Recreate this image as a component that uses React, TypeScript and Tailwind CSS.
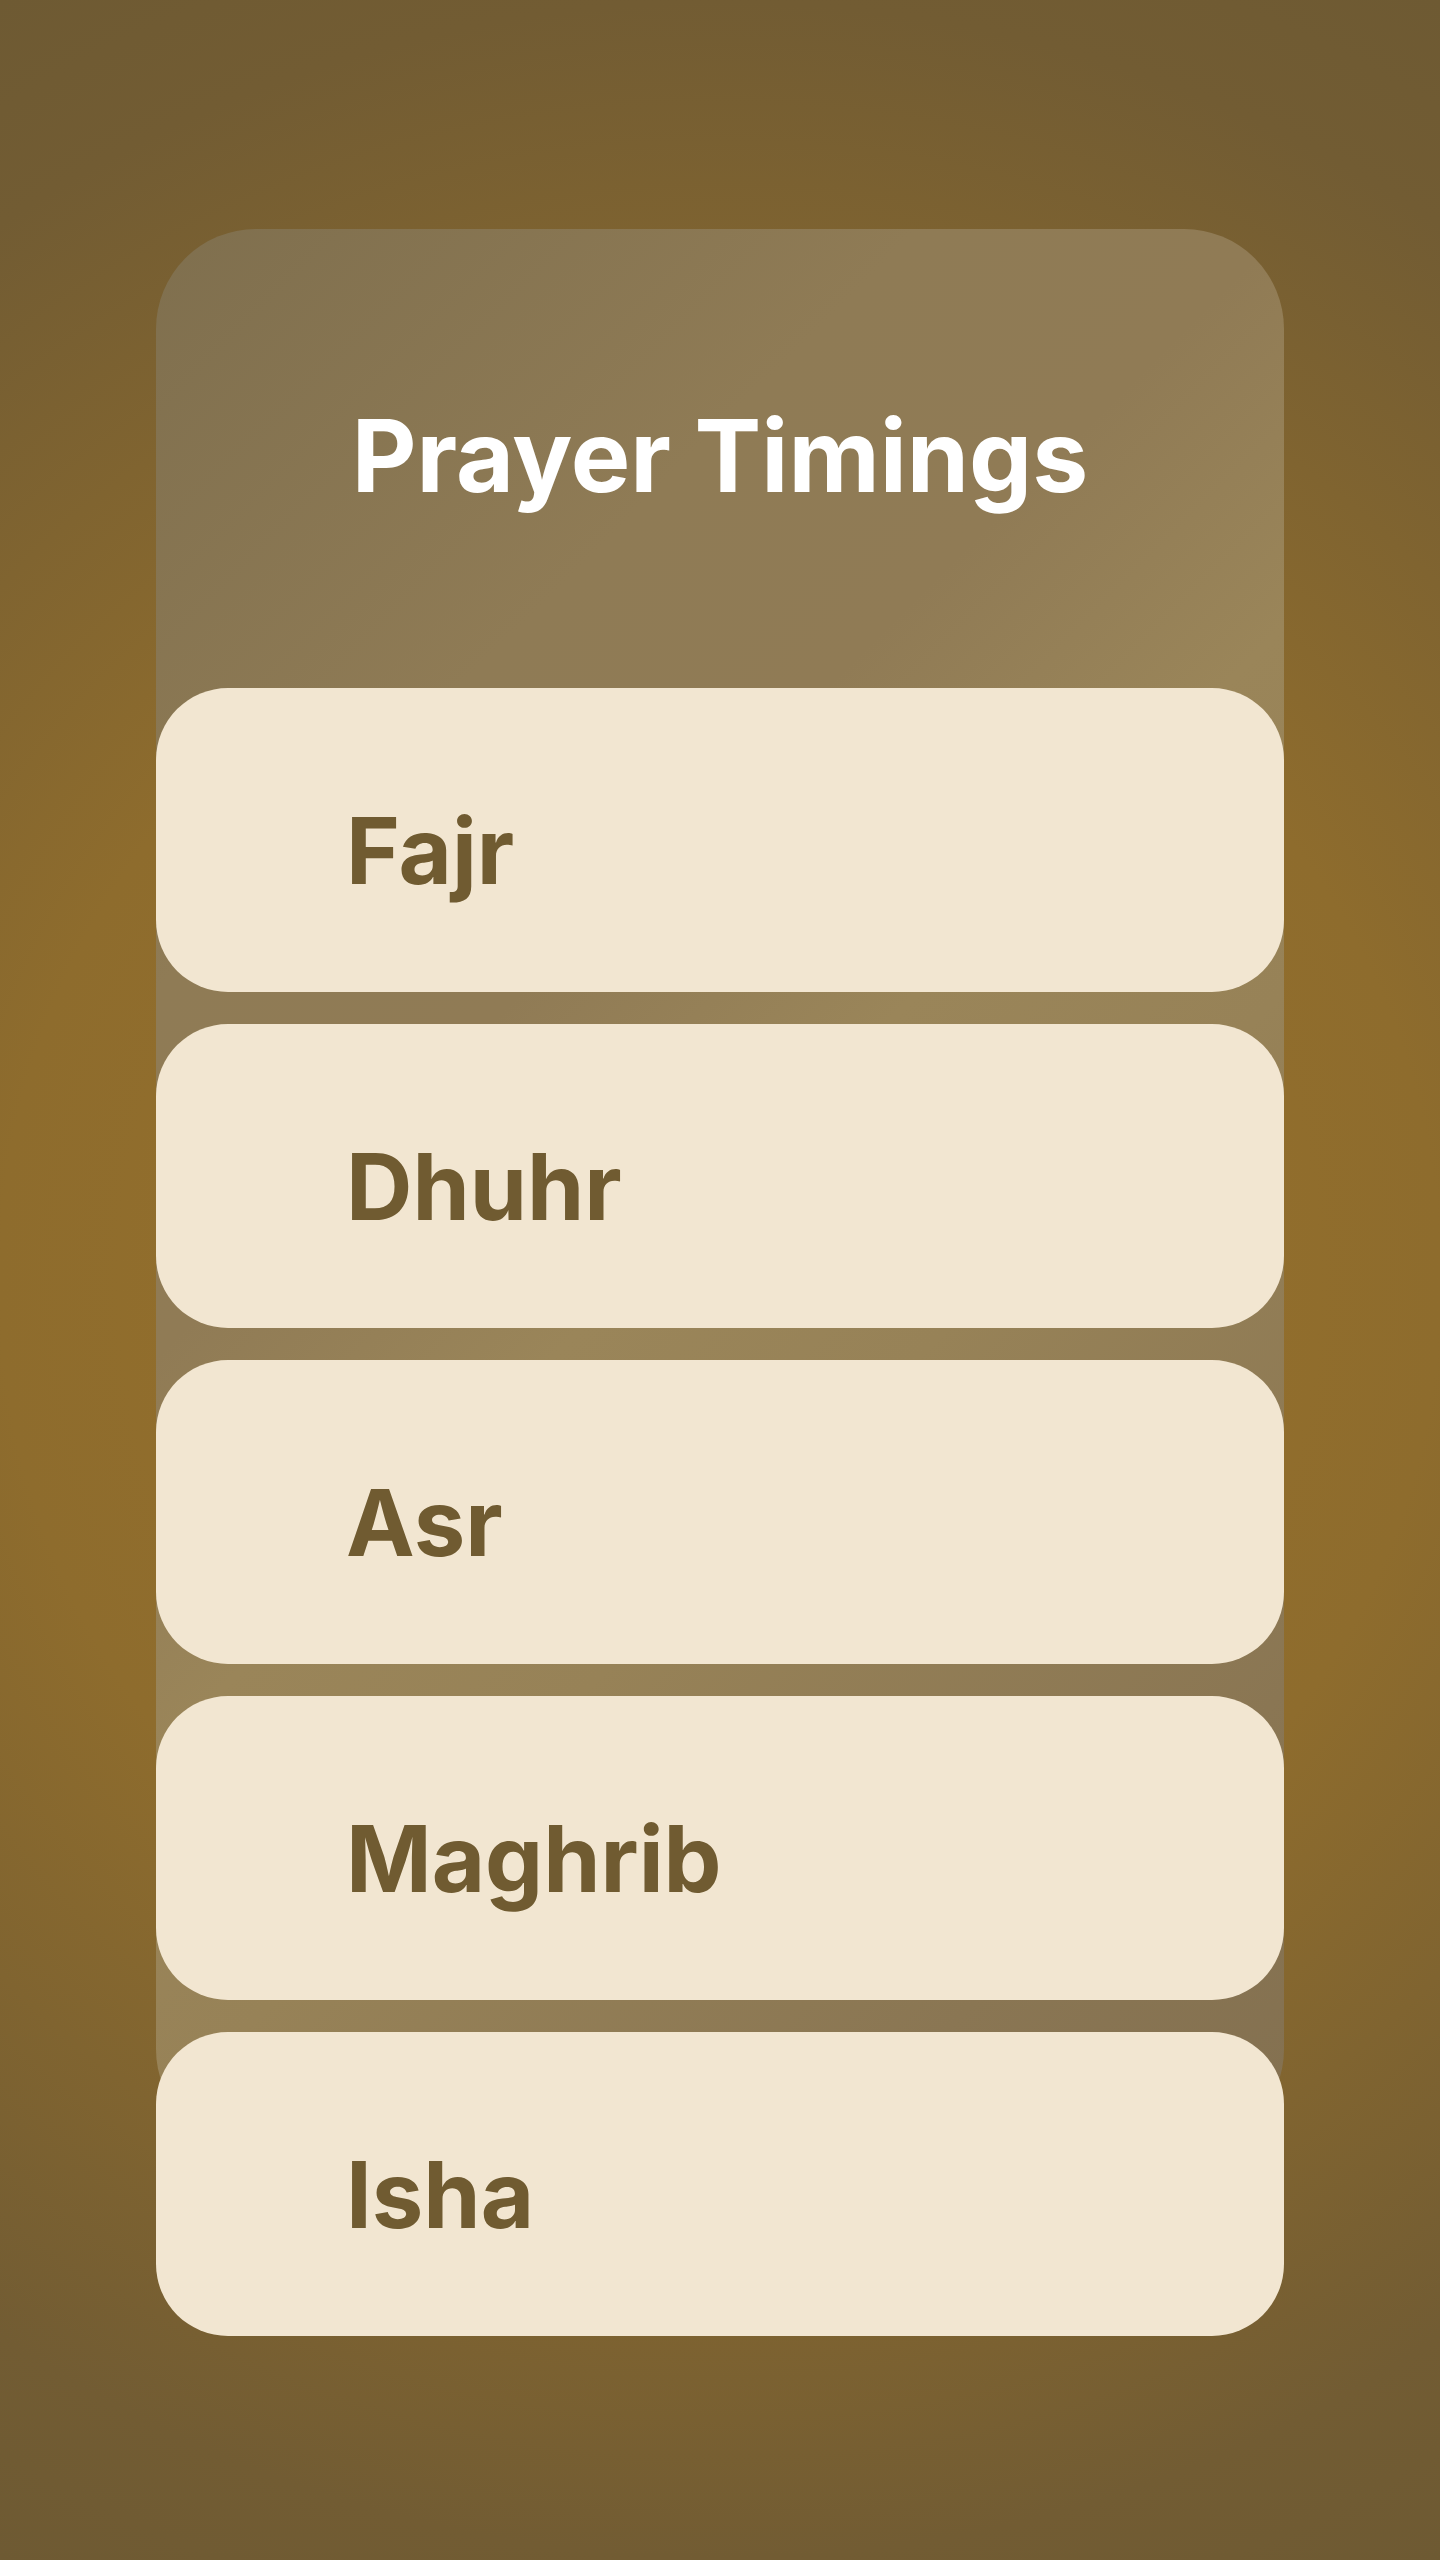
const prayers = ["Fajr", "Dhuhr", "Asr", "Maghrib", "Isha"];

const PrayerCard = ({ name }: { name: string }) => {
    return (
        <div className="h-[304px] w-full rounded-[72px] bg-[#f2e6d1] pl-[190px] pt-[117px]">
            <h2 className="text-[92px] font-bold leading-none text-[#705b31]">{name}</h2>
        </div>
    );
};

const App = () => {
    return (
        <div className="min-h-screen bg-[radial-gradient(circle_at_center,#9a722a_0%,#8e6c2d_49%,#725c33_87%,#6e5a33_100%)] pt-[229px] font-['Inter',sans-serif]">
            {/* translucent panel, cards run past its bottom edge */}
            <div className="mx-auto h-[1920px] w-[1128px] rounded-[100px] bg-[linear-gradient(135deg,#7f6f4e_0%,#8f7b55_25%,#907b55_37%,#9a8559_50%,#978257_62%,#8a7653_85%,#837050_100%)] pt-[177px]">
                <h1 className="text-center text-[100px] font-bold leading-none text-white">Prayer Timings</h1>

                <div className="mt-[182px] flex flex-col gap-[32px]">
                    {prayers.map((p) => (
                        <PrayerCard key={p} name={p} />
                    ))}
                </div>
            </div>
        </div>
    );
};

export default App;
